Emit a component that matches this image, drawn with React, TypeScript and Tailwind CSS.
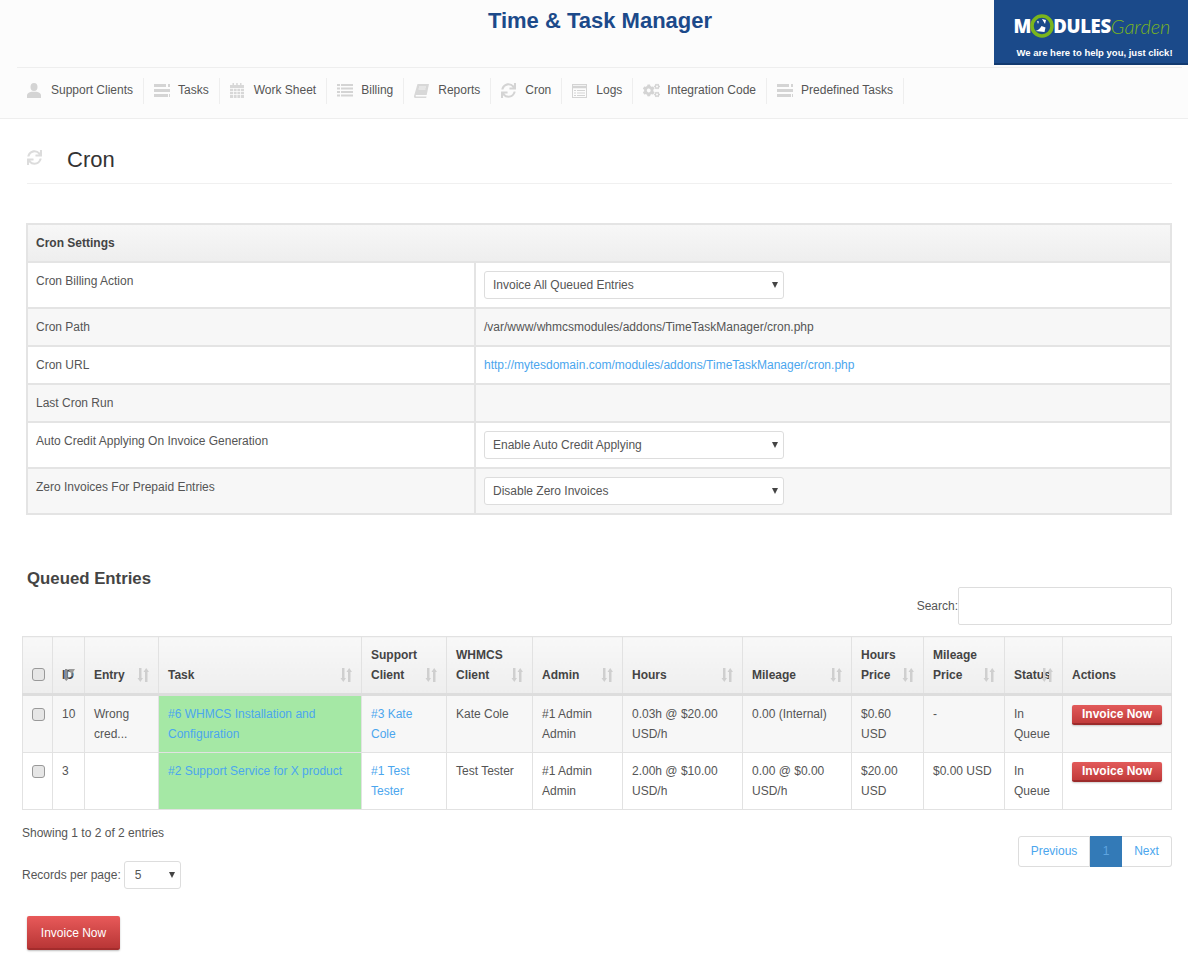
import React from "react";
import { FaSync, FaCogs } from "react-icons/fa";

const font = "[font-family:'Liberation_Sans',Arial,sans-serif]";

function UserIcon() {
  return (
    <svg width="14" height="15" viewBox="0 0 14 15" fill="#d4d4d4">
      <ellipse cx="7" cy="4" rx="3.500" ry="4" />
      <path d="M0 15v-3c0-1.500 2-2.500 4.500-3.200h5C12 9.500 14 10.500 14 12v3z" />
    </svg>
  );
}
function TasksIcon() {
  return (
    <svg width="16" height="13" viewBox="0 0 16 13" fill="#d4d4d4">
      <path d="M0 0h12v3H0zM14 0h2v3h-2zM0 5h16v3H0zM0 10h14v3H0zM15 10h1v3h-1z" />
    </svg>
  );
}
function CalendarIcon() {
  return (
    <svg width="14" height="15" viewBox="0 0 14 15" fill="#d8d8d8">
      <path d="M0 2h14v13H0z" />
      <path d="M2.500 0h1.500v3H2.500zM6.200 0h1.500v3H6.200zM10 0h1.500v3H10z" />
      <path stroke="#fcfcfc" strokeWidth="0.8" d="M0 5.500h14M0 8.500h14M0 11.500h14M3.500 5v10M7 5v10M10.500 5v10" />
    </svg>
  );
}
function ListIcon() {
  return (
    <svg width="16" height="13" viewBox="0 0 16 13" fill="#d4d4d4">
      <path d="M0 0h3v2H0zM4 0h12v2H4zM0 3.500h3v2H0zM4 3.500h12v2H4zM0 7h3v2H0zM4 7h12v2H4zM0 10.500h3v2H0zM4 10.500h12v2H4z" />
    </svg>
  );
}
function BookIcon() {
  return (
    <svg width="15" height="14" viewBox="0 0 15 14" fill="#d8d8d8">
      <path d="M3.500 0H15l-2.300 11H2.200c-.8 0-.8 1.500 0 1.500h10.300L12.200 14H1.500C.4 14-.2 13 0 12z" />
      <path d="M5 3h7M4.500 5h7" stroke="#fcfcfc" strokeWidth="0.8" />
    </svg>
  );
}
function LogsIcon() {
  return (
    <svg width="15" height="14" viewBox="0 0 15 14" fill="none" stroke="#d4d4d4">
      <rect x="0.500" y="0.500" width="14" height="13" strokeWidth="1" />
      <path d="M0 3h15" strokeWidth="2.500" />
      <path d="M2 6.500h2M5 6.500h8M2 9h2M5 9h8M2 11.500h2M5 11.500h8" strokeWidth="1" />
    </svg>
  );
}

const G = "text-[#d4d4d4]";
const nav: { label: string; icon: React.ReactNode }[] = [
  { label: "Support Clients", icon: <UserIcon /> },
  { label: "Tasks", icon: <TasksIcon /> },
  { label: "Work Sheet", icon: <CalendarIcon /> },
  { label: "Billing", icon: <ListIcon /> },
  { label: "Reports", icon: <BookIcon /> },
  { label: "Cron", icon: <FaSync size={15} className={G} /> },
  { label: "Logs", icon: <LogsIcon /> },
  { label: "Integration Code", icon: <FaCogs size={17} className={G} /> },
  { label: "Predefined Tasks", icon: <TasksIcon /> },
];

function Sort({ dark }: { dark?: boolean }) {
  return (
    <svg className="absolute right-[9px] bottom-[11px]" width="12" height="14" viewBox="0 0 12 14" fill="#cfcfcf">
      {dark ? (
        <>
          <path d="M2 1h2.500v9H6l-2.700 3L.5 10H2z" fill="#8f8f8f" />
          <path d="M5 1h7L9.500 5v3H8V5z" fill="#9a9a9a" />
        </>
      ) : (
        <>
          <path d="M2 0h2.500v10H6l-2.700 4L.5 10H2z" />
          <path d="M8 14h2.500V4H12L9.200 0 6.500 4H8z" />
        </>
      )}
    </svg>
  );
}

function Select({ value, className, small }: { value: string; className: string; small?: boolean }) {
  return (
    <div className={`relative ${className}`}>
      <select
        defaultValue={value}
        className={`w-full h-full appearance-none bg-white border border-[#ddd] rounded-[3px] text-[12px] text-[#555] outline-none ${small ? "pl-[10px]" : "pl-2"}`}
      >
        <option>{value}</option>
      </select>
      <span className="absolute right-[6px] top-[11px] w-0 h-0 border-l-[3.5px] border-r-[3.5px] border-t-[6px] border-l-transparent border-r-transparent border-t-[#444]" />
    </div>
  );
}

const Link = ({ children }: { children: React.ReactNode }) => <a className="text-[#4ba6ee]">{children}</a>;

function Checkbox() {
  return (
    <input
      type="checkbox"
      className="appearance-none block w-[13px] h-[13px] rounded-[3px] border border-[#999] bg-[#e6e6e6]"
    />
  );
}

function InvoiceSmall() {
  return (
    <button className="block mt-[1px] w-[90px] h-[20px] rounded-[2px] text-white text-[12px] font-bold leading-[19px] bg-gradient-to-b from-[#e25a5a] to-[#c23b3b] border-b-2 border-[#9c2b2b] shadow-[0_1px_2px_rgba(0,0,0,0.2)]">
      Invoice Now
    </button>
  );
}

const cronRows: { label: string; h: string; value: React.ReactNode; alt?: boolean }[] = [
  { label: "Cron Billing Action", h: "h-[46px]", value: <Select value="Invoice All Queued Entries" className="w-[300px] h-[28px]" /> },
  { label: "Cron Path", h: "h-[38px]", alt: true, value: "/var/www/whmcsmodules/addons/TimeTaskManager/cron.php" },
  { label: "Cron URL", h: "h-[38px]", value: <Link>http://mytesdomain.com/modules/addons/TimeTaskManager/cron.php</Link> },
  { label: "Last Cron Run", h: "h-[38px]", alt: true, value: "" },
  { label: "Auto Credit Applying On Invoice Generation", h: "h-[46px]", value: <Select value="Enable Auto Credit Applying" className="w-[300px] h-[28px]" /> },
  { label: "Zero Invoices For Prepaid Entries", h: "h-[46px]", alt: true, value: <Select value="Disable Zero Invoices" className="w-[300px] h-[28px]" /> },
];

const widths = [30, 32, 74, 203, 85, 86, 90, 120, 109, 72, 81, 58, 109];
const heads: { t: React.ReactNode; sort?: boolean; dark?: boolean }[] = [
  { t: <Checkbox /> },
  { t: "ID", sort: true, dark: true },
  { t: "Entry", sort: true },
  { t: "Task", sort: true },
  { t: "Support Client", sort: true },
  { t: "WHMCS Client", sort: true },
  { t: "Admin", sort: true },
  { t: "Hours", sort: true },
  { t: "Mileage", sort: true },
  { t: "Hours Price", sort: true },
  { t: "Mileage Price", sort: true },
  { t: "Status", sort: true },
  { t: "Actions" },
];

const rows = [
  ["10", "Wrong cred...", "#6 WHMCS Installation and Configuration", "#3 Kate Cole", "Kate Cole", "#1 Admin Admin", "0.03h @ $20.00 USD/h", "0.00 (Internal)", "$0.60 USD", "-", "In Queue"],
  ["3", "", "#2 Support Service for X product", "#1 Test Tester", "Test Tester", "#1 Admin Admin", "2.00h @ $10.00 USD/h", "0.00 @ $0.00 USD/h", "$20.00 USD", "$0.00 USD", "In Queue"],
];

const td = "border border-[#e2e2e2] px-[9px] pt-[8px] pb-[8px] align-top";

export default function App() {
  return (
    <div className={`${font} relative bg-white text-[12px] leading-[20px] text-[#555] min-h-[958px]`}>
      <header className="h-[119px] bg-[#fcfcfc] border-b border-[#eeeeee] pl-[17px] pr-[6px]">
        <div className="h-[68px] border-b border-[#eeeeee] flex justify-center pl-[1px]">
          <h1 className="text-[22px] leading-[25px] pt-[8px] font-bold text-[#1c4a8a] h-fit box-content">
            Time &amp; Task Manager
          </h1>
        </div>
        <nav className="flex pt-[10px]">
          {nav.map((n) => (
            <a
              key={n.label}
              className="h-[26px] flex items-center pl-[10px] pr-[10px] border-r border-[#eeeeee] leading-[23px] pb-[1px]"
            >
              <span className="w-[24px] flex-none flex items-center">{n.icon}</span>
              <span className="whitespace-nowrap">{n.label}</span>
            </a>
          ))}
        </nav>
      </header>

      {/* logo banner */}
      <div className="absolute right-0 top-0 w-[194px] h-[65px] bg-[#1b4a8a] border-b-2 border-[#123a70] text-center">
        <div className="flex items-center justify-center h-[36px] mt-[8px] pl-[2px] leading-none">
          <span className="font-['Open_Sans'] font-extrabold text-[18.5px] text-white tracking-[-0.3px]">M</span>
          <svg width="24" height="24" viewBox="0 0 24 24" className="mx-[-1px]">
            <circle cx="12" cy="12" r="10" fill="#1b4a8a" stroke="#7ab51d" strokeWidth="3.500" />
            <path d="M5.500 17c3-.5 5-3 6-5l4 1.500-1 4.500zM12 5l4 1-1 4zM7 7l2 .5-1 2.500z" fill="#ffffff" />
          </svg>
          <span className="font-['Open_Sans'] font-extrabold text-[18.5px] text-white tracking-[-0.3px]">DULES</span>
          <span className="font-['Lato'] italic font-light text-[20px] text-[#7ab51d]">Garden</span>
        </div>
        <div className="text-white text-[9.5px] font-bold leading-[12px] mt-[3px] pl-[7px] whitespace-nowrap">
          We are here to help you, just click!
        </div>
      </div>

      <main className="pl-[27px] pr-[16px]">
        <div className="h-[65px] border-b border-[#f0f0f0] flex items-center pt-[17px]">
          <span className="w-[40px] flex-none">
            <FaSync size={15} className="text-[#dcdcdc] mb-[4px]" />
          </span>
          <h2 className="text-[22px] font-normal text-[#333]">Cron</h2>
        </div>

        <table className="mt-[39px] -ml-[1px] w-[1146px] table-fixed border-collapse border-2 border-[#e4e4e4]">
          <colgroup>
            <col className="w-[448px]" />
            <col />
          </colgroup>
          <thead>
            <tr>
              <th
                colSpan={2}
                className="h-[38px] px-[8px] text-left font-bold text-[#444] bg-gradient-to-b from-[#f7f7f7] to-[#eeeeee] border-b-2 border-[#e4e4e4]"
              >
                Cron Settings
              </th>
            </tr>
          </thead>
          <tbody>
            {cronRows.map((r) => (
              <tr key={r.label} className={`${r.h} ${r.alt ? "bg-[#f7f7f7]" : "bg-white"} border-b-2 border-[#e4e4e4]`}>
                <td className="px-[8px] py-[8px] align-top border-r-2 border-[#e4e4e4]">{r.label}</td>
                <td className="px-[8px] align-middle">{r.value}</td>
              </tr>
            ))}
          </tbody>
        </table>
      </main>

      <section className="pl-[22px] pr-[16px]">
        <h3 className="ml-[5px] mt-[53px] text-[16.8px] leading-[22px] font-bold text-[#444]">Queued Entries</h3>
        <div className="flex justify-end items-center -mt-[3px] mb-[11px]">
          <span>Search:</span>
          <input className="w-[214px] h-[38px] border border-[#ddd] rounded-[2px] bg-white" />
        </div>

        <table className="w-[1149px] table-fixed border-collapse">
          <colgroup>
            {widths.map((w, i) => (
              <col key={i} style={{ width: w }} />
            ))}
          </colgroup>
          <thead>
            <tr>
              {heads.map((h, i) => (
                <th
                  key={i}
                  className={`relative border border-[#e2e2e2] border-b-[3px] border-b-[#dddddd] px-[9px] pt-[7px] h-[58px] text-left align-bottom font-bold text-[#444] bg-gradient-to-b from-[#f8f8f8] to-[#eeeeee] ${i === 0 ? "pb-[12px]" : "pb-[8px]"}`}
                >
                  {h.t}
                  {h.sort && <Sort dark={h.dark} />}
                </th>
              ))}
            </tr>
          </thead>
          <tbody>
            {rows.map((r, ri) => (
              <tr key={ri} className={ri === 0 ? "bg-[#f7f7f7]" : "bg-white"}>
                <td className="border border-[#e2e2e2] pl-[9px] pr-[8px] pt-[12px] pb-[8px] align-top">
                  <Checkbox />
                </td>
                {r.map((c, ci) => {
                  if (ci === 2)
                    return (
                      <td key={ci} className={`${td} bg-[#a5e8a5] border-[#9bdc9b]`}>
                        <Link>{c}</Link>
                      </td>
                    );
                  if (ci === 3)
                    return (
                      <td key={ci} className={td}>
                        <Link>{c}</Link>
                      </td>
                    );
                  return (
                    <td key={ci} className={td}>
                      {c}
                    </td>
                  );
                })}
                <td className={td}>
                  <InvoiceSmall />
                </td>
              </tr>
            ))}
          </tbody>
        </table>

        <div className="flex justify-between mt-[13px]">
          <div>
            <div className="leading-[20px]">Showing 1 to 2 of 2 entries</div>
            <div className="flex items-center mt-[18px] gap-[3px]">
              <span>Records per page:</span>
              <Select value="5" small className="w-[57px] h-[28px]" />
            </div>
          </div>
          <div className="flex h-[31px] mt-[13px] text-[#4ba6ee] leading-[29px] text-center">
            <a className="w-[72px] border border-[#ddd] rounded-l-[3px] bg-white">Previous</a>
            <a className="w-[32px] bg-[#337ab7] border border-[#337ab7] text-[#5ea5e0]">1</a>
            <a className="w-[50px] border border-l-0 border-[#ddd] rounded-r-[3px] bg-white">Next</a>
          </div>
        </div>

        <button className="block ml-[5px] mt-[27px] w-[93px] h-[34px] pt-[1px] rounded-[2px] text-white text-[12px] bg-gradient-to-b from-[#e85a5a] to-[#b93636] border-b-2 border-[#a32c2c] shadow-[0_1px_2px_rgba(0,0,0,0.25)]">
          Invoice Now
        </button>
      </section>
    </div>
  );
}
